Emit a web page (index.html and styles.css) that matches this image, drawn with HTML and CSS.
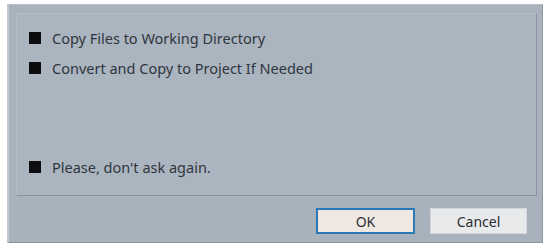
FILE: index.html
```html
<!DOCTYPE html>
<html>
<head>
<meta charset="utf-8">
<link rel="stylesheet" href="styles.css">
</head>
<body>
<div class="dialog">
  <div class="panel">
    <div class="options">
      <label class="option"><span class="box"></span><span class="label">Copy Files to Working Directory</span></label>
      <label class="option"><span class="box"></span><span class="label">Convert and Copy to Project If Needed</span></label>
    </div>
    <label class="option last"><span class="box"></span><span class="label">Please, don't ask again.</span></label>
  </div>
  <div class="footer">
    <button class="btn ok">OK</button>
    <button class="btn cancel">Cancel</button>
  </div>
</div>
</body>
</html>
```
FILE: styles.css
```css
html, body {
  margin: 0;
  padding: 0;
  background: #ffffff;
}
body {
  width: 548px;
  height: 248px;
  overflow: hidden;
  font-family: "Noto Sans", "Open Sans", sans-serif;
}
.dialog {
  box-sizing: border-box;
  margin: 4px 0 0 7px;
  width: 536px;
  height: 239px;
  background: #a8b2bd;
  border-left: 2px solid #c2cbd5;
  border-top: 1px solid #b9c2cc;
  border-right: 1px solid #8f99a4;
  border-bottom: 1px solid #8c96a1;
  padding: 8px 5px 0 7px;
  display: flex;
  flex-direction: column;
}
.panel {
  box-sizing: border-box;
  height: 183px;
  background: #abb5c0;
  border: 1px solid #8a939e;
  border-top-color: #b4bdc7;
  border-left-color: #b4bdc7;
  padding: 18px 0 0 12px;
  display: flex;
  flex-direction: column;
}
.options {
  display: flex;
  flex-direction: column;
  gap: 18px;
  flex: 1;
}
.option {
  display: flex;
  align-items: center;
  gap: 11px;
  height: 12px;
  color: #30353c;
  font-size: 14.5px;
}
.option.last {
  margin-bottom: 22px;
}
.box {
  width: 12px;
  height: 12px;
  background: #0d0d0f;
  flex: none;
}
.footer {
  display: flex;
  justify-content: flex-end;
  gap: 15px;
  padding: 12px 10px 0 0;
}
.btn {
  box-sizing: border-box;
  height: 26px;
  font-family: "Noto Sans", "Open Sans", sans-serif;
  font-size: 14px;
  color: #2a2d33;
  padding: 0;
}
.ok {
  width: 99px;
  background: #efe8e2;
  border: 2px solid #2b78b4;
}
.cancel {
  width: 97px;
  background: #e8e9eb;
  border: 1px solid #d4d7db;
}
```
